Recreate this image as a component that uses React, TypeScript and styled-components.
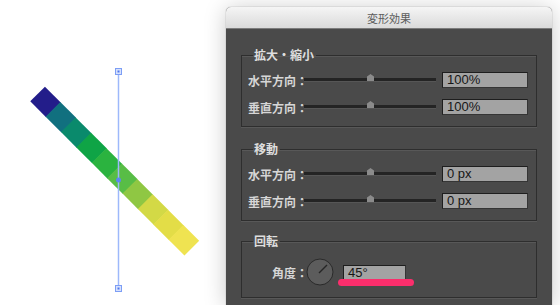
import React from "react";
import styled, { createGlobalStyle } from "styled-components";

const GlobalStyle = createGlobalStyle`
  html, body {
    margin: 0;
    padding: 0;
    background: #fff;
  }
  body {
    font-family: "Noto Sans CJK JP", "Noto Sans", sans-serif;
  }
`;

const Screen = styled.div`
  display: flex;
  width: 560px;
  height: 305px;
  overflow: hidden;
  background: #fff;
`;

const Artboard = styled.svg`
  flex: none;
  display: block;
`;

const DialogArea = styled.div`
  flex: 1;
  display: flex;
  padding: 7px 8px 0 0;
`;

const Dialog = styled.section`
  position: relative;
  z-index: 1;
  flex: 1;
  display: flex;
  flex-direction: column;
  background: #4a4a4a;
  border-radius: 5px 5px 0 0;
  box-shadow: 0 2px 22px rgba(0, 0, 0, 0.22), 0 0 0 1px rgba(0, 0, 0, 0.06);
  overflow: hidden;
`;

const TitleBar = styled.header`
  flex: none;
  height: 21px;
  display: flex;
  align-items: center;
  justify-content: center;
  background: linear-gradient(#f5f5f5, #dadada);
  border-bottom: 1px solid #7c7c7c;
  font-size: 11px;
  color: #5c5c5c;
`;

const Body = styled.div`
  padding: 19px 15px 0 15px;
`;

const Group = styled.fieldset<{ $gap?: number }>`
  margin: ${(p) => p.$gap ?? 0}px 0 0;
  padding: 8px 8px 9px 6px;
  min-width: 0;
  border: 1px solid #2e2e2e;
  box-shadow: 0 1px 0 #585858, inset 0 1px 0 #585858;
`;

const Legend = styled.legend`
  margin-left: 5px;
  padding: 0 2px 0 1px;
  font-size: 12px;
  line-height: 14px;
  font-weight: 700;
  color: #dedede;
`;

const Row = styled.div<{ $indent?: number; $h?: number }>`
  display: flex;
  align-items: center;
  height: ${(p) => p.$h ?? 20}px;
  padding-left: ${(p) => p.$indent ?? 0}px;
  & + & {
    margin-top: 7px;
  }
`;

const Label = styled.span`
  flex: none;
  font-size: 12px;
  font-weight: 700;
  color: #d6d6d6;
  white-space: nowrap;
`;

const Track = styled.div`
  position: relative;
  flex: 1;
  height: 3px;
  margin-left: -4px;
  background: #242424;
  border-bottom: 1px solid #565656;
`;

const Thumb = styled.div`
  position: absolute;
  left: 50%;
  top: -4px;
  width: 7px;
  height: 7px;
  margin-left: -3px;
  background: #8b8b8b;
  clip-path: polygon(50% 0, 100% 35%, 100% 100%, 0 100%, 0 35%);
`;

const Field = styled.div<{ $w: number; $h?: number; $gap?: number }>`
  position: relative;
  flex: none;
  box-sizing: border-box;
  width: ${(p) => p.$w}px;
  height: ${(p) => p.$h ?? 16}px;
  margin-left: ${(p) => p.$gap ?? 6}px;
  padding-left: 4px;
  background: #a3a3a3;
  border: 1px solid #1e1e1e;
  border-right-color: #353535;
  border-bottom-color: #353535;
  font-family: "Liberation Sans", Arial, sans-serif;
  font-size: 13px;
  line-height: ${(p) => (p.$h ?? 16) - 2}px;
  color: #161616;
`;

const Highlight = styled.div`
  position: absolute;
  left: -6px;
  top: 13px;
  width: 76px;
  height: 7px;
  border-radius: 4px;
  background: #fb2e6c;
`;

const Dial = styled.svg`
  flex: none;
  display: block;
  margin-left: -2px;
`;

const colors = [
  "#231d8a",
  "#11707f",
  "#0a8a6c",
  "#0fa446",
  "#2bb33f",
  "#58bd46",
  "#8fc743",
  "#d3d946",
  "#e3dd47",
  "#efe351",
];

const Canvas = () => {
  const size = 21.75;
  return (
    <Artboard width={226} height={305} viewBox="0 0 226 305">
      <g transform="translate(37.8 94.2) rotate(45)">
        {colors.map((c, i) => (
          <rect key={c} x={i * size - 0.3} y={-10.4} width={size + 0.6} height={20.8} fill={c} />
        ))}
      </g>
      <line x1={118.5} y1={72} x2={118.5} y2={288} stroke="#9db8fb" strokeWidth={1.5} />
      <rect x={115.5} y={68.5} width={6} height={6} fill="#d6e1fd" stroke="#7d9ef5" />
      <rect x={117.5} y={70.5} width={2} height={2} fill="#4f78ee" />
      <rect x={115.5} y={285.5} width={6} height={6} fill="#d6e1fd" stroke="#7d9ef5" />
      <rect x={117.5} y={287.5} width={2} height={2} fill="#4f78ee" />
      <circle cx={118.5} cy={180} r={2.5} fill="#5f86f1" />
    </Artboard>
  );
};

const SliderRow = ({ label, value }: { label: string; value: string }) => (
  <Row>
    <Label>{label}</Label>
    <Track>
      <Thumb />
    </Track>
    <Field $w={86}>{value}</Field>
  </Row>
);

const App = () => (
  <Screen>
    <GlobalStyle />
    <Canvas />
    <DialogArea>
      <Dialog>
        <TitleBar>変形効果</TitleBar>
        <Body>
          <Group>
            <Legend>拡大・縮小</Legend>
            <SliderRow label="水平方向：" value="100%" />
            <SliderRow label="垂直方向：" value="100%" />
          </Group>
          <Group $gap={15}>
            <Legend>移動</Legend>
            <SliderRow label="水平方向：" value="0 px" />
            <SliderRow label="垂直方向：" value="0 px" />
          </Group>
          <Group $gap={13}>
            <Legend>回転</Legend>
            <Row $indent={24} $h={32}>
              <Label>角度：</Label>
              <Dial width={28} height={28} viewBox="0 0 28 28">
                <circle cx={14} cy={14} r={13} fill="#5c5c5c" stroke="#2a2a2a" />
                <line x1={13} y1={15} x2={21} y2={7} stroke="#262626" strokeWidth={1.4} />
              </Dial>
              <Field $w={63} $h={15} $gap={9}>
                45°
                <Highlight />
              </Field>
            </Row>
          </Group>
        </Body>
      </Dialog>
    </DialogArea>
  </Screen>
);

export default App;
